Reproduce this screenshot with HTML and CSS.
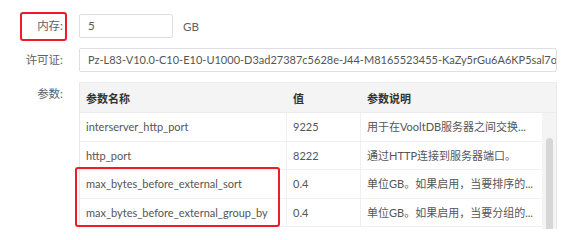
FILE: index.html
```html
<!DOCTYPE html>
<html lang="zh-CN">
<head>
<meta charset="utf-8">
<title>配置</title>
<link rel="stylesheet" href="styles.css">
</head>
<body>
<div class="form">
  <div class="row">
    <div class="lbl">内存:</div>
    <div class="inp inp-small">5</div>
    <div class="unit">GB</div>
  </div>
  <div class="row">
    <div class="lbl">许可证:</div>
    <div class="inp inp-wide">Pz-L83-V10.0-C10-E10-U1000-D3ad27387c5628e-J44-M8165523455-KaZy5rGu6A6KP5sal7oY</div>
  </div>
  <div class="row row-table">
    <div class="lbl">参数:</div>
    <div class="table">
      <div class="thead">
        <div class="c c-name">参数名称</div>
        <div class="c c-val">值</div>
        <div class="c c-desc">参数说明</div>
      </div>
      <div class="tbody">
        <div class="rows">
          <div class="tr">
            <div class="c c-name">interserver_http_port</div>
            <div class="c c-val">9225</div>
            <div class="c c-desc">用于在VooltDB服务器之间交换...</div>
          </div>
          <div class="tr">
            <div class="c c-name">http_port</div>
            <div class="c c-val">8222</div>
            <div class="c c-desc">通过HTTP连接到服务器端口。</div>
          </div>
          <div class="tr">
            <div class="c c-name">max_bytes_before_external_sort</div>
            <div class="c c-val">0.4</div>
            <div class="c c-desc">单位GB。如果启用，当要排序的...</div>
          </div>
          <div class="tr">
            <div class="c c-name">max_bytes_before_external_group_by</div>
            <div class="c c-val">0.4</div>
            <div class="c c-desc">单位GB。如果启用，当要分组的...</div>
          </div>
        </div>
        <div class="scroll"><div class="thumb"></div></div>
      </div>
    </div>
  </div>
</div>
<div class="mark mark-mem"></div>
<div class="mark mark-rows"></div>
</body>
</html>
```

FILE: styles.css
```css
html, body {
  margin: 0;
  padding: 0;
  background: #ffffff;
  overflow: hidden;
}
body {
  width: 570px;
  height: 229px;
  position: relative;
  font-family: "Lato", "Noto Sans CJK SC", sans-serif;
  font-size: 11px;
  color: #555555;
}
.form {
  padding-top: 14px;
  display: flex;
  flex-direction: column;
  gap: 10px;
  height: 229px;
  box-sizing: border-box;
  overflow: hidden;
}
.row {
  display: flex;
  align-items: center;
}
.row-table {
  align-items: flex-start;
}
.lbl {
  width: 63px;
  margin-right: 16px;
  text-align: right;
  color: #606266;
  line-height: 24px;
  font-size: 11.5px;
  flex: none;
}
.inp {
  box-sizing: border-box;
  height: 24px;
  line-height: 22px;
  border: 1px solid #dcdfe6;
  border-radius: 2px;
  padding: 0 8px;
  color: #555555;
  white-space: nowrap;
  overflow: hidden;
  flex: none;
}
.inp-small {
  width: 94px;
  font-size: 11.5px;
}
.inp-wide {
  width: 478px;
}
.unit {
  margin-left: 10px;
  color: #606266;
  font-size: 11.5px;
}
.table {
  box-sizing: border-box;
  width: 478px;
  height: 147px;
  overflow: hidden;
  border-left: 1px solid #e8e8e8;
  border-right: 1px solid #e8e8e8;
  border-top: 1px solid #eeeeee;
  flex: none;
}
.thead {
  display: flex;
  height: 29px;
  align-items: center;
  background: #f4f4f4;
  color: #333333;
  font-weight: 700;
  border-bottom: 1px solid #ececec;
}
.c {
  box-sizing: border-box;
  padding-left: 6px;
  white-space: nowrap;
  overflow: hidden;
  flex: none;
}
.c-name { width: 207px; }
.c-val { width: 74px; }
.c-desc { width: 181px; }
.thead .c-desc { width: 195px; }
.tbody {
  display: flex;
}
.rows {
  width: 462px;
}
.tr {
  display: flex;
  height: 28.5px;
  box-sizing: border-box;
  border-bottom: 1px solid #f0f0f0;
}
.tr .c {
  line-height: 27.5px;
  border-right: 1px solid #f0f0f0;
}
.tr .c-desc {
  border-right: none;
}
.scroll {
  width: 14px;
  background: #f4f4f4;
  height: 118px;
  display: flex;
  justify-content: center;
  padding-top: 25px;
  box-sizing: border-box;
  overflow: hidden;
}
.thumb {
  width: 7px;
  height: 120px;
  border-radius: 4px;
  background: #d6d6d6;
  flex: none;
}
.mark {
  position: absolute;
  box-sizing: border-box;
  border: 2px solid #ee1c25;
  border-radius: 3px;
}
.mark-mem {
  left: 20px;
  top: 12px;
  width: 47px;
  height: 29px;
}
.mark-rows {
  left: 75px;
  top: 167px;
  width: 205px;
  height: 60px;
}
```
